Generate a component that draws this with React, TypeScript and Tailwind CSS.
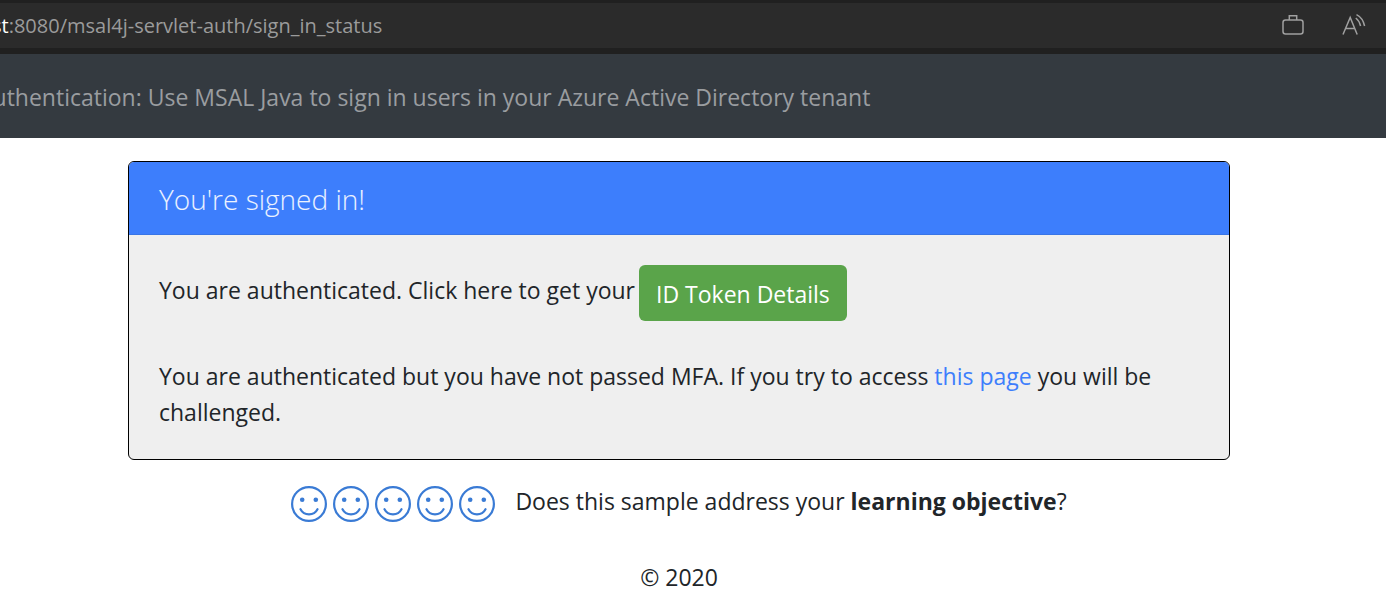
import React from "react";

function Smiley() {
  return (
    <svg viewBox="0 0 36 36" className="size-9" fill="none" stroke="#3a7bd5" strokeWidth="2.200" strokeLinecap="round" aria-hidden="true">
      <circle cx="18" cy="18" r="16.900" />
      <path d="M9.500 23.200C13 30 23 30 26.500 23.200" />
      <circle cx="11.200" cy="13.700" r="2.300" fill="#3a7bd5" stroke="none" />
      <circle cx="24.800" cy="13.700" r="2.300" fill="#3a7bd5" stroke="none" />
    </svg>
  );
}

export default function App() {
  return (
    <div className="min-h-screen overflow-x-hidden bg-white text-[23px] leading-9 text-[#212529] [font-family:'Open_Sans','Noto_Sans',sans-serif]">
      <div className="flex items-center justify-between border-t-3 border-b-6 border-[#202020] bg-[#2b2b2b] py-1 pr-5">
        <div className="-ml-2 text-xl leading-[37px] text-[#9b9b9b]">
          <span className="text-white">st</span>:8080/msal4j-servlet-auth/sign_in_status
        </div>
        <div className="flex gap-9">
          <button aria-label="Collections">
            <svg viewBox="0 0 24 24" className="size-6" fill="none" stroke="#a0a0a0" strokeWidth="1.500">
              <rect x="1" y="6" width="20" height="14" rx="2.500" />
              <path d="M7.300 6V1.700h7.400V6" />
            </svg>
          </button>
          <button aria-label="Read aloud">
            <svg viewBox="0 0 24 24" className="size-6" fill="none" stroke="#a0a0a0" strokeWidth="1.500">
              <path d="M1 20.500 8.200 3.500l7 17M3.800 14.500h8.900M13.800 4Q17.500 7 18.600 12M14.500 .7Q20.900 4 22.600 12" />
            </svg>
          </button>
        </div>
      </div>
      <header className="bg-[#343a40] pt-[25px] pb-[23px] text-[#9a9da0]">
        <div className="-ml-[22px] whitespace-nowrap">Authentication: Use MSAL Java to sign in users in your Azure Active Directory tenant</div>
      </header>
      <main className="mr-[156px] ml-32 pt-[23px]">
        <section className="overflow-hidden rounded-md border border-black bg-[#efefef]">
          <h1 className="border-b border-[#3975e6] bg-[#3d7efc] px-[30px] pt-[19px] pb-[17px] text-[28px] leading-9 font-light text-white/90">You're signed in!</h1>
          <div className="px-[30px] pt-[30px] pb-[29px]">
            <p className="flex items-start gap-1">
              <span className="pt-[7px]">You are authenticated. Click here to get your</span>
              <button className="rounded-md bg-[#5aa44a] px-[17px] pt-[11px] pb-[9px] text-white">ID Token Details</button>
            </p>
            <p className="mt-[37px]">
              You are authenticated but you have not passed MFA. If you try to access{" "}
              <a href="#" className="text-[#3d7efc]">this page</a> you will be challenged.
            </p>
          </div>
        </section>
      </main>
      <footer className="mr-[156px] ml-32 pt-[23px] text-center">
        <div className="flex items-start justify-center gap-5">
          <div className="flex gap-[6px] pt-[3px]">
            <Smiley />
            <Smiley />
            <Smiley />
            <Smiley />
            <Smiley />
          </div>
          <p>Does this sample address your <strong>learning objective</strong>?</p>
        </div>
        <p className="mt-[37px]">© 2020</p>
      </footer>
    </div>
  );
}
